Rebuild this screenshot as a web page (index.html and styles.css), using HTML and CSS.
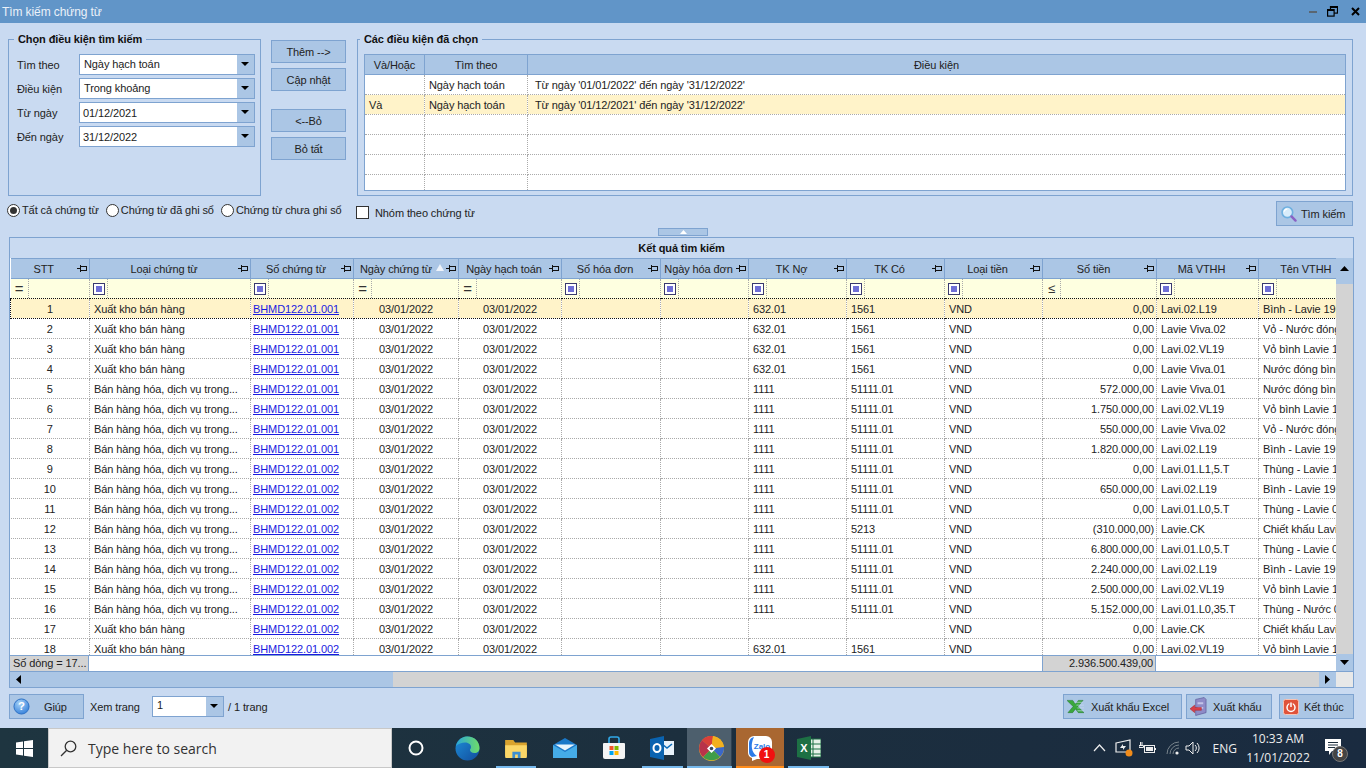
FILE: index.html
```html
<!DOCTYPE html>
<html lang="vi">
<head>
<meta charset="utf-8">
<title>Tìm kiếm chứng từ</title>
<link rel="stylesheet" href="styles.css">
</head>
<body>
<div class="window">
  <header class="titlebar">
    <span class="title">Tìm kiếm chứng từ</span>
    <div class="winctl">
      <svg width="8" height="2" class="min"><rect width="8" height="2" fill="#5a6672"/></svg>
      <svg width="11" height="11" viewBox="0 0 11 11" fill="none" stroke="#000" stroke-width="1.2"><rect x="3.5" y=".6" width="7" height="6.5"/><rect x=".6" y="3.6" width="6.5" height="6.5" fill="#6195c8"/><path d="M.6 4.2h6.500M3.500 1.200h7" stroke-width="1.600"/></svg>
      <svg class="close" width="9" height="9" viewBox="0 0 9 9" stroke="#000" stroke-width="2"><path d="M1 1l7 7M8 1L1 8"/></svg>
    </div>
  </header>

  <section class="top">
    <div class="topleft">
      <div class="group left-group">
        <span class="legend">Chọn điều kiện tìm kiếm</span>
        <div class="formrow"><label>Tìm theo</label><div class="combo"><span>Ngày hạch toán</span><i class="drop"></i></div></div>
        <div class="formrow"><label>Điều kiện</label><div class="combo"><span>Trong khoảng</span><i class="drop"></i></div></div>
        <div class="formrow"><label>Từ ngày</label><div class="combo date"><span>01/12/2021</span><i class="drop"></i></div></div>
        <div class="formrow"><label>Đến ngày</label><div class="combo date"><span>31/12/2022</span><i class="drop"></i></div></div>
      </div>
      <div class="actions">
        <button class="btn">Thêm --&gt;</button>
        <button class="btn">Cập nhật</button>
        <button class="btn gap">&lt;--Bỏ</button>
        <button class="btn">Bỏ tất</button>
      </div>
    </div>
    <div class="group right-group">
      <span class="legend">Các điều kiện đã chọn</span>
      <table class="cond">
        <colgroup><col class="c1"><col class="c2"><col></colgroup>
        <thead><tr><th>Và/Hoặc</th><th>Tìm theo</th><th>Điều kiện</th></tr></thead>
        <tbody>
          <tr><td></td><td>Ngày hạch toán</td><td class="pad">Từ ngày '01/01/2022' đến ngày '31/12/2022'</td></tr>
          <tr class="sel"><td>Và</td><td>Ngày hạch toán</td><td class="pad">Từ ngày '01/12/2021' đến ngày '31/12/2022'</td></tr>
          <tr><td></td><td></td><td></td></tr>
          <tr><td></td><td></td><td></td></tr>
          <tr><td></td><td></td><td></td></tr>
          <tr class="short"><td></td><td></td><td></td></tr>
        </tbody>
      </table>
    </div>
  </section>

  <section class="optrow">
    <div class="radios">
      <span class="radio on"><i></i>Tất cả chứng từ</span>
      <span class="radio"><i></i>Chứng từ đã ghi sổ</span>
      <span class="radio"><i></i>Chứng từ chưa ghi sổ</span>
    </div>
    <span class="check"><i></i>Nhóm theo chứng từ</span>
    <button class="btn search">
      <svg width="18" height="18" viewBox="0 0 22 22"><circle cx="9" cy="9" r="6.500" fill="#d8ecfb" stroke="#6fb0e0" stroke-width="2"/><path d="M5 8a4 4 0 0 1 4-3" stroke="#fff" stroke-width="1.500" fill="none"/><path d="M14 14l5 5" stroke="#8a62c4" stroke-width="3" stroke-linecap="round"/></svg>
      <span>Tìm kiếm</span>
    </button>
  </section>

  <div class="splitter"><span class="grip"><svg width="7" height="4"><path d="M0 4l3.500-4 3.500 4z" fill="#fff"/></svg></span></div>

  <section class="results">
    <div class="results-title">Kết quả tìm kiếm</div>
    <div class="results-body">
      <div class="gridcol">
        <div class="gridmain">
          <table class="grid">
            <colgroup>
              <col class="w1"><col class="w2"><col class="w3"><col class="w4"><col class="w5"><col class="w6"><col class="w7"><col class="w8"><col class="w9"><col class="w10"><col class="w11"><col class="w12"><col class="w13">
            </colgroup>
            <thead>
              <tr>
                <th>STT<b class="pin"></b></th><th>Loại chứng từ<b class="pin"></b></th><th>Số chứng từ<b class="pin"></b></th><th class="sorted">Ngày chứng từ <em class="sort"></em><b class="pin"></b></th><th>Ngày hạch toán<b class="pin"></b></th><th>Số hóa đơn<b class="pin"></b></th><th>Ngày hóa đơn<b class="pin"></b></th><th>TK Nợ<b class="pin"></b></th><th>TK Có<b class="pin"></b></th><th>Loại tiền<b class="pin"></b></th><th>Số tiền<b class="pin"></b></th><th>Mã VTHH<b class="pin"></b></th><th>Tên VTHH</th>
              </tr>
              <tr class="filter">
                <td><span class="op eq">=</span></td><td><span class="op"><i class="fbox"></i></span></td><td><span class="op"><i class="fbox"></i></span></td><td><span class="op eq">=</span></td><td><span class="op eq">=</span></td><td><span class="op"><i class="fbox"></i></span></td><td><span class="op"><i class="fbox"></i></span></td><td><span class="op"><i class="fbox"></i></span></td><td><span class="op"><i class="fbox"></i></span></td><td><span class="op"><i class="fbox"></i></span></td><td><span class="op le">≤</span></td><td><span class="op"><i class="fbox"></i></span></td><td><span class="op"><i class="fbox"></i></span></td>
              </tr>
            </thead>
            <tbody>
              <tr class="current"><td class="ctr">1</td><td>Xuất kho bán hàng</td><td><a href="#">BHMD122.01.001</a></td><td class="ctr">03/01/2022</td><td class="ctr">03/01/2022</td><td></td><td></td><td>632.01</td><td>1561</td><td>VND</td><td class="num">0,00</td><td>Lavi.02.L19</td><td>Bình - Lavie 19L</td></tr>
              <tr><td class="ctr">2</td><td>Xuất kho bán hàng</td><td><a href="#">BHMD122.01.001</a></td><td class="ctr">03/01/2022</td><td class="ctr">03/01/2022</td><td></td><td></td><td>632.01</td><td>1561</td><td>VND</td><td class="num">0,00</td><td>Lavie Viva.02</td><td>Vỏ - Nước đóng bình</td></tr>
              <tr><td class="ctr">3</td><td>Xuất kho bán hàng</td><td><a href="#">BHMD122.01.001</a></td><td class="ctr">03/01/2022</td><td class="ctr">03/01/2022</td><td></td><td></td><td>632.01</td><td>1561</td><td>VND</td><td class="num">0,00</td><td>Lavi.02.VL19</td><td>Vỏ bình Lavie 19L</td></tr>
              <tr><td class="ctr">4</td><td>Xuất kho bán hàng</td><td><a href="#">BHMD122.01.001</a></td><td class="ctr">03/01/2022</td><td class="ctr">03/01/2022</td><td></td><td></td><td>632.01</td><td>1561</td><td>VND</td><td class="num">0,00</td><td>Lavie Viva.01</td><td>Nước đóng bình</td></tr>
              <tr><td class="ctr">5</td><td>Bán hàng hóa, dịch vụ trong...</td><td><a href="#">BHMD122.01.001</a></td><td class="ctr">03/01/2022</td><td class="ctr">03/01/2022</td><td></td><td></td><td>1111</td><td>51111.01</td><td>VND</td><td class="num">572.000,00</td><td>Lavie Viva.01</td><td>Nước đóng bình</td></tr>
              <tr><td class="ctr">6</td><td>Bán hàng hóa, dịch vụ trong...</td><td><a href="#">BHMD122.01.001</a></td><td class="ctr">03/01/2022</td><td class="ctr">03/01/2022</td><td></td><td></td><td>1111</td><td>51111.01</td><td>VND</td><td class="num">1.750.000,00</td><td>Lavi.02.VL19</td><td>Vỏ bình Lavie 19L</td></tr>
              <tr><td class="ctr">7</td><td>Bán hàng hóa, dịch vụ trong...</td><td><a href="#">BHMD122.01.001</a></td><td class="ctr">03/01/2022</td><td class="ctr">03/01/2022</td><td></td><td></td><td>1111</td><td>51111.01</td><td>VND</td><td class="num">550.000,00</td><td>Lavie Viva.02</td><td>Vỏ - Nước đóng bình</td></tr>
              <tr><td class="ctr">8</td><td>Bán hàng hóa, dịch vụ trong...</td><td><a href="#">BHMD122.01.001</a></td><td class="ctr">03/01/2022</td><td class="ctr">03/01/2022</td><td></td><td></td><td>1111</td><td>51111.01</td><td>VND</td><td class="num">1.820.000,00</td><td>Lavi.02.L19</td><td>Bình - Lavie 19L</td></tr>
              <tr><td class="ctr">9</td><td>Bán hàng hóa, dịch vụ trong...</td><td><a href="#">BHMD122.01.002</a></td><td class="ctr">03/01/2022</td><td class="ctr">03/01/2022</td><td></td><td></td><td>1111</td><td>51111.01</td><td>VND</td><td class="num">0,00</td><td>Lavi.01.L1,5.T</td><td>Thùng - Lavie 1,5L</td></tr>
              <tr><td class="ctr">10</td><td>Bán hàng hóa, dịch vụ trong...</td><td><a href="#">BHMD122.01.002</a></td><td class="ctr">03/01/2022</td><td class="ctr">03/01/2022</td><td></td><td></td><td>1111</td><td>51111.01</td><td>VND</td><td class="num">650.000,00</td><td>Lavi.02.L19</td><td>Bình - Lavie 19L</td></tr>
              <tr><td class="ctr">11</td><td>Bán hàng hóa, dịch vụ trong...</td><td><a href="#">BHMD122.01.002</a></td><td class="ctr">03/01/2022</td><td class="ctr">03/01/2022</td><td></td><td></td><td>1111</td><td>51111.01</td><td>VND</td><td class="num">0,00</td><td>Lavi.01.L0,5.T</td><td>Thùng - Lavie 0,5L</td></tr>
              <tr><td class="ctr">12</td><td>Bán hàng hóa, dịch vụ trong...</td><td><a href="#">BHMD122.01.002</a></td><td class="ctr">03/01/2022</td><td class="ctr">03/01/2022</td><td></td><td></td><td>1111</td><td>5213</td><td>VND</td><td class="num">(310.000,00)</td><td>Lavie.CK</td><td>Chiết khấu Lavie</td></tr>
              <tr><td class="ctr">13</td><td>Bán hàng hóa, dịch vụ trong...</td><td><a href="#">BHMD122.01.002</a></td><td class="ctr">03/01/2022</td><td class="ctr">03/01/2022</td><td></td><td></td><td>1111</td><td>51111.01</td><td>VND</td><td class="num">6.800.000,00</td><td>Lavi.01.L0,5.T</td><td>Thùng - Lavie 0,5L</td></tr>
              <tr><td class="ctr">14</td><td>Bán hàng hóa, dịch vụ trong...</td><td><a href="#">BHMD122.01.002</a></td><td class="ctr">03/01/2022</td><td class="ctr">03/01/2022</td><td></td><td></td><td>1111</td><td>51111.01</td><td>VND</td><td class="num">2.240.000,00</td><td>Lavi.02.L19</td><td>Bình - Lavie 19L</td></tr>
              <tr><td class="ctr">15</td><td>Bán hàng hóa, dịch vụ trong...</td><td><a href="#">BHMD122.01.002</a></td><td class="ctr">03/01/2022</td><td class="ctr">03/01/2022</td><td></td><td></td><td>1111</td><td>51111.01</td><td>VND</td><td class="num">2.500.000,00</td><td>Lavi.02.VL19</td><td>Vỏ bình Lavie 19L</td></tr>
              <tr><td class="ctr">16</td><td>Bán hàng hóa, dịch vụ trong...</td><td><a href="#">BHMD122.01.002</a></td><td class="ctr">03/01/2022</td><td class="ctr">03/01/2022</td><td></td><td></td><td>1111</td><td>51111.01</td><td>VND</td><td class="num">5.152.000,00</td><td>Lavi.01.L0,35.T</td><td>Thùng - Nước 0,35L</td></tr>
              <tr><td class="ctr">17</td><td>Xuất kho bán hàng</td><td><a href="#">BHMD122.01.002</a></td><td class="ctr">03/01/2022</td><td class="ctr">03/01/2022</td><td></td><td></td><td></td><td></td><td>VND</td><td class="num">0,00</td><td>Lavie.CK</td><td>Chiết khấu Lavie</td></tr>
              <tr><td class="ctr">18</td><td>Xuất kho bán hàng</td><td><a href="#">BHMD122.01.002</a></td><td class="ctr">03/01/2022</td><td class="ctr">03/01/2022</td><td></td><td></td><td>632.01</td><td>1561</td><td>VND</td><td class="num">0,00</td><td>Lavi.02.VL19</td><td>Vỏ bình Lavie 19L</td></tr>
            </tbody>
          </table>
        </div>
        <div class="summary">
          <span class="sum-count">Số dòng = 17...</span>
          <span class="sum-blank"></span>
          <span class="sum-total">2.936.500.439,00</span>
          <span class="sum-rest"></span>
        </div>
      </div>
      <div class="vscroll">
        <span class="sb-btn up"><svg width="9" height="5"><path d="M0 5l4.500-5 4.500 5z" fill="#000"/></svg></span>
        <span class="sb-track"></span>
        <span class="sb-btn"><svg width="9" height="5"><path d="M0 0l4.500 5 4.500-5z" fill="#000"/></svg></span>
      </div>
    </div>
    <div class="hscroll">
      <span class="hs-btn"><svg width="5" height="9"><path d="M5 0L0 4.500 5 9z" fill="#000"/></svg></span>
      <span class="hs-thumb"></span>
      <span class="hs-track"></span>
      <span class="hs-btn"><svg width="5" height="9"><path d="M0 0l5 4.500L0 9z" fill="#000"/></svg></span>
      <span class="hs-corner"></span>
    </div>
  </section>

  <footer class="bottom">
    <button class="btn help">
      <svg width="17" height="17" viewBox="0 0 18 18"><defs><radialGradient id="hg" cx=".4" cy=".3" r=".8"><stop offset="0" stop-color="#a9d4f7"/><stop offset="1" stop-color="#2a79d8"/></radialGradient></defs><circle cx="9" cy="9" r="8" fill="url(#hg)" stroke="#2b6fc2"/><text x="9" y="13" text-anchor="middle" class="qmark">?</text></svg>
      <span>Giúp</span>
    </button>
    <span class="pg-label">Xem trang</span>
    <div class="combo pager"><span>1</span><i class="drop"></i></div>
    <span class="pg-total">/ 1 trang</span>
    <div class="bottom-right">
      <button class="btn excel">
        <svg width="17" height="16" viewBox="0 0 18 16"><path d="M0 1h6l3 4 3-4h5l-5.500 6.500L18 14h-6l-3-4-3 4H1l5.500-6.500z" fill="#3aa83c" stroke="#1c6e26" stroke-width=".5"/><path d="M8 3h9M10 6h8M11 9h7M11 12h7" stroke="#c9daf1" stroke-width=".7"/></svg>
        <span>Xuất khẩu Excel</span>
      </button>
      <button class="btn export">
        <svg width="17" height="19" viewBox="0 0 18 19"><path d="M6 2l9-2 2 2v14l-11 3z" fill="#8e8cc8" stroke="#5b5a98" stroke-width=".7"/><path d="M8 5h6v2H8zM8 10h6v2H8z" fill="#c4c4e8"/><path d="M0 12l5-4v2.500h7v3H5V16z" fill="#d8404a" stroke="#a52028" stroke-width=".5"/></svg>
        <span>Xuất khẩu</span>
      </button>
      <button class="btn quit">
        <svg width="16" height="16" viewBox="0 0 16 16"><rect x=".5" y=".5" width="15" height="15" rx="2" fill="#e0533a" stroke="#f7c4b4"/><circle cx="8" cy="8.500" r="4" fill="none" stroke="#fff" stroke-width="1.500"/><path d="M8 3v5" stroke="#e0533a" stroke-width="3.500"/><path d="M8 3.500v4.500" stroke="#fff" stroke-width="1.500"/></svg>
        <span>Kết thúc</span>
      </button>
    </div>
  </footer>
</div>

<nav class="taskbar">
  <span class="start"><svg width="17" height="17" viewBox="0 0 17 17" fill="#fff"><path d="M0 2.500l7-1V8H0zM8 1.300L17 0v8H8zM0 9h7v6.500l-7-1zM8 9h9v8l-9-1.300z"/></svg></span>
  <div class="tsearch">
    <svg width="17" height="17" viewBox="0 0 17 17" fill="none" stroke="#333" stroke-width="1.300"><circle cx="10.500" cy="6.500" r="5.300"/><path d="M6.700 10.300L1 16"/></svg>
    <span>Type here to search</span>
  </div>
  <div class="tasks">
    <span class="task"><svg width="16" height="16"><circle cx="8" cy="8" r="6.500" fill="none" stroke="#fff" stroke-width="2"/></svg></span>
    <span class="task edge">
      <svg width="25" height="25" viewBox="0 0 25 25"><defs><linearGradient id="eg" x1="0" y1="0" x2="1" y2="1"><stop offset="0" stop-color="#1d8ed8"/><stop offset="1" stop-color="#124c9c"/></linearGradient><linearGradient id="eh" x1="0" y1="0" x2="1" y2="0"><stop offset="0" stop-color="#2aa7d8"/><stop offset="1" stop-color="#6fdc68"/></linearGradient></defs><circle cx="12.500" cy="12.500" r="12" fill="url(#eg)"/><path d="M1 10C3 2 9 .5 12.500 .5 20 .5 24.500 6 24.500 12c0 3-2 5-5 5-3 0-4.500-1.500-4.500-3 0-1 1-1.500 1-3 0-3-3-4.500-6-4.500S3 8 1 10z" fill="url(#eh)"/></svg>
    </span>
    <span class="task run">
      <svg width="22" height="19" viewBox="0 0 24 21"><path d="M0 1h9l2 3h13v15H0z" fill="#d9a32e"/><path d="M0 7h24v13a1 1 0 0 1-1 1H1a1 1 0 0 1-1-1z" fill="#fbd768"/><path d="M8 14h9v7h-3v-4h-3v4H8z" fill="#3d8fd0"/></svg>
    </span>
    <span class="task">
      <svg width="24" height="20" viewBox="0 0 24 20"><path d="M0 7L12 0l12 7v13H0z" fill="#1a78c8"/><path d="M0 7l12 7 12-7v13H0z" fill="#45ace8"/><path d="M2 6.500h20l-10 6z" fill="#e8f4fc"/></svg>
    </span>
    <span class="task">
      <svg width="24" height="24" viewBox="0 0 24 24"><path d="M2 7h20a1 1 0 0 1 1 1v13a2 2 0 0 1-2 2H3a2 2 0 0 1-2-2V8a1 1 0 0 1 1-1z" fill="#f4f4f4"/><path d="M7 7V3a2 2 0 0 1 2-2h6a2 2 0 0 1 2 2v4" fill="none" stroke="#30a8e8" stroke-width="1.600"/><rect x="7.500" y="10" width="4" height="4" fill="#f0562a"/><rect x="12.500" y="10" width="4" height="4" fill="#7fba00"/><rect x="7.500" y="15" width="4" height="4" fill="#00a4ef"/><rect x="12.500" y="15" width="4" height="4" fill="#ffb900"/></svg>
    </span>
    <span class="task run">
      <svg width="24" height="24" viewBox="0 0 24 24"><rect x="10" y="5" width="14" height="14" fill="#e8f2fb"/><path d="M12 8l5 4 5-4" fill="none" stroke="#0a6ab8" stroke-width="1.600"/><path d="M0 3l14-3v24L0 21z" fill="#0a63b0"/><ellipse cx="7" cy="12" rx="3.500" ry="4" fill="none" stroke="#fff" stroke-width="2"/></svg>
    </span>
    <span class="task run active">
      <svg width="25" height="25" viewBox="0 0 25 25"><circle cx="12.500" cy="12.500" r="12.500" fill="#e6b52c"/><path d="M12.500 12.500L3 4A12.500 12.500 0 0 1 14 0z" fill="#d8403a"/><path d="M12.500 12.500L14 0A12.500 12.500 0 0 1 25 11z" fill="#f2b01e"/><path d="M12.500 12.500L25 11a12.500 12.500 0 0 1-4 10z" fill="#3a68c8"/><path d="M12.500 12.500L21 21a12.500 12.500 0 0 1-17 0z" fill="#3f9d48"/><path d="M12.500 12.500L4 21A12.500 12.500 0 0 1 3 4z" fill="#b8334a"/><path d="M12.500 8l4.500 4.500-4.500 4.500L8 12.500z" fill="#fff"/><circle cx="12.500" cy="12.500" r="1.800" fill="#394a5c"/></svg>
    </span>
    <span class="task zalo">
      <svg width="24" height="25" viewBox="0 0 24 25"><path d="M6 0h12a6 6 0 0 1 6 6v11a6 6 0 0 1-6 6H9l-5 2v-3a6 6 0 0 1-4-5V6a6 6 0 0 1 6-6z" fill="#fff"/><path d="M6 1C2 2 1 5 1 8v8c0 2 1 4 3 5l5-1C5 18 3 12 4 7c.3-2 1-4 2-6z" fill="#2b7be8"/><text x="14" y="13" text-anchor="middle" class="zalotxt">Zalo</text></svg>
      <em class="zbadge">1</em>
    </span>
    <span class="task run">
      <svg width="24" height="24" viewBox="0 0 24 24"><rect x="10" y="3" width="14" height="18" fill="#e6f1e8" stroke="#1d7044"/><path d="M10 8h14M10 13h14M10 18h14M16 3v18" stroke="#1d7044"/><path d="M0 3l14-3v24L0 21z" fill="#1d7044"/><text x="7" y="16" text-anchor="middle" class="xtxt">X</text></svg>
    </span>
  </div>
  <div class="tray">
    <svg width="13" height="8" viewBox="0 0 13 8" fill="none" stroke="#eee" stroke-width="1.200"><path d="M1 7l5.500-6L12 7"/></svg>
    <span class="tray-i">
      <svg width="18" height="18" viewBox="0 0 18 18" fill="none" stroke="#eee" stroke-width="1.200"><path d="M1 4l14-3v12H1z"/><path d="M5 9l3-4v2h3l-3 4V9z" fill="#eee" stroke="none"/><circle cx="14" cy="14" r="3.500" fill="#f28c1a" stroke="none"/></svg>
    </span>
    <svg class="t-batt" width="17" height="12" viewBox="0 0 17 12" fill="none" stroke="#eee"><rect x="5.500" y="3.500" width="10" height="7"/><rect x="7" y="5" width="7" height="4" fill="#eee" stroke="none"/><path d="M16.500 6v2M0 3.500h4.500v2H0zM1.500 0v3M3 0v3"/></svg>
    <svg class="t-wifi" width="15" height="14" viewBox="0 0 15 14" fill="none" stroke="#78848c"><path d="M1 13a12 12 0 0 1 12-12M4 13a9 9 0 0 1 9-9M7 13a6 6 0 0 1 6-6"/><circle cx="11" cy="12" r="1.600" fill="#eee" stroke="none"/></svg>
    <svg class="t-vol" width="16" height="14" viewBox="0 0 16 14" fill="none" stroke="#eee"><path d="M1 5h3l4-4v12L4 9H1z"/><path d="M10 4a4 4 0 0 1 0 6M12 2a7 7 0 0 1 0 10"/></svg>
    <span class="lang">ENG</span>
    <span class="clock"><span>10:33 AM</span><span>11/01/2022</span></span>
    <span class="notif">
      <svg width="16" height="17" viewBox="0 0 16 17"><path d="M0 0h16v12H7l-3 4v-4H0z" fill="#fff"/><path d="M3 3.500h10M3 6h10M3 8.500h7" stroke="#1c2f3e"/></svg>
      <em class="nbadge">8</em>
    </span>
  </div>
</nav>
</body>
</html>
```
FILE: styles.css
```css
* { box-sizing: border-box; }
html, body { margin: 0; padding: 0; width: 1366px; height: 768px; overflow: hidden; }
body { font: 11px "Liberation Sans", Arial, sans-serif; letter-spacing: -0.1px; color: #222; background: #c9daf1; display: flex; flex-direction: column; }
button { font: inherit; letter-spacing: inherit; color: inherit; padding: 0; cursor: default; }

.window { height: 728px; display: flex; flex-direction: column; background: #c9daf1; }
.titlebar { height: 23px; background: #6195c8; display: flex; align-items: center; justify-content: space-between; padding: 0 6px 0 2px; flex: none; }
.title { color: #eaf1f9; font-size: 12px; padding-top: 1px; }
.winctl { display: flex; align-items: center; gap: 10px; }
.close { margin-left: 3px; }

.top { display: flex; gap: 11px; padding: 16px 13px 0 8px; height: 173px; flex: none; }
.topleft { display: flex; gap: 10px; }
.group { position: relative; border: 1px solid #7ea3d0; height: 157px; }
.legend { position: absolute; left: 5px; top: -9px; padding: 0 4px; background: #c9daf1; font-weight: bold; color: #111; line-height: 16px; }
.right-group .legend { left: 2px; }
.left-group { width: 253px; padding: 14px 5px 0 8px; display: flex; flex-direction: column; gap: 4px; }
.formrow { display: flex; align-items: center; height: 20px; }
.formrow label { width: 62px; padding-top: 2px; }
.combo { flex: 1; height: 21px; border: 1px solid #7ea3d0; background: #fff; display: flex; align-items: stretch; justify-content: space-between; }
.combo span { padding-left: 4px; line-height: 18px; }
.combo.date span { padding-left: 3px; line-height: 20px; }
.drop { width: 17px; background: #abc6e5; position: relative; display: block; flex: none; }
.drop::after { content: ""; position: absolute; left: 4px; top: 7px; border: 4px solid transparent; border-top: 4px solid #000; border-bottom: 0; }

.actions { display: flex; flex-direction: column; width: 75px; padding-top: 1px; gap: 5px; }
.btn { border: 1px solid #7ea3d0; background: #abc6e5; height: 23px; display: flex; align-items: center; justify-content: center; flex: none; }
.actions .gap { margin-top: 13px; }
.right-group { flex: 1; padding: 14px 6px 0 6px; }

.cond { width: 100%; height: 136px; border-collapse: collapse; table-layout: fixed; border: 1px solid #7ea3d0; background: #fff; }
.c1 { width: 60px; }
.c2 { width: 103px; }
.cond th { height: 20px; font-weight: normal; background: #abc6e5; border-right: 1px solid #7ea3d0; border-bottom: 1px solid #7ea3d0; padding: 0; }
.cond td { height: 20px; padding: 0 0 0 4px; border-right: 1px dotted #aaa; border-bottom: 1px dotted #aaa; white-space: nowrap; overflow: hidden; }
.cond td.pad { padding-left: 7px; }
.cond .sel td { background: #fff3c9; }
.cond .short td { height: 16px; border-bottom: 0; }

.optrow { height: 32px; display: flex; align-items: flex-start; padding: 5px 13px 0 7px; flex: none; }
.radios { display: flex; gap: 7px; width: 349px; padding-top: 2px; }
.radio { display: flex; align-items: center; gap: 2px; line-height: 14px; white-space: nowrap; }
.radio i { width: 13px; height: 13px; border-radius: 50%; border: 1px solid #333; background: #fff; display: block; position: relative; }
.radio.on i::after { content: ""; position: absolute; left: 2px; top: 2px; width: 7px; height: 7px; border-radius: 50%; background: #333; }
.check { display: flex; align-items: center; gap: 6px; margin-top: 5px; color: #222; }
.check i { width: 13px; height: 13px; border: 1px solid #333; background: #fff; display: block; }
.search { margin-left: auto; width: 77px; height: 25px; justify-content: flex-start; padding-left: 3px; gap: 3px; }

.splitter { height: 9px; display: flex; justify-content: center; flex: none; }
.grip { width: 50px; height: 8px; background: #abc6e5; border: 1px solid #7ea3d0; display: flex; align-items: center; justify-content: center; }

.results { margin: 0 12px 0 9px; border: 1px solid #7ea3d0; height: 451px; display: flex; flex-direction: column; flex: none; }
.results-title { height: 20px; text-align: center; font-weight: bold; line-height: 21px; color: #111; flex: none; }
.results-body { height: 413px; display: flex; flex: none; overflow: hidden; }
.gridcol { width: 1326px; flex: none; display: flex; flex-direction: column; }
.gridmain { height: 397px; overflow: hidden; background: #fff; flex: none; }
.grid { border-collapse: collapse; table-layout: fixed; width: 1326px; }
.w1 { width: 79px; } .w2 { width: 161px; } .w3 { width: 103px; } .w4 { width: 105px; } .w5 { width: 103px; } .w6 { width: 99px; } .w7 { width: 88px; } .w8 { width: 98px; } .w9 { width: 98px; } .w10 { width: 98px; } .w11 { width: 114px; } .w12 { width: 102px; } .w13 { width: 78px; }
.grid th { height: 20px; font-weight: normal; background: #abc6e5; border-right: 1px solid #7ea3d0; border-top: 1px solid #7ea3d0; border-bottom: 1px solid #7ea3d0; padding: 0 12px 0 0; position: relative; white-space: nowrap; }
.grid th.sorted { padding-right: 8px; }
.grid th:last-child { border-right: 0; padding: 0 0 0 16px; }
.pin { position: absolute; right: 2px; top: 7px; width: 6px; height: 5px; border: 1px solid #111; border-width: 1px 1px 1px 0; display: block; }
.pin::before { content: ""; position: absolute; left: -4px; top: 1px; width: 4px; height: 1px; background: #111; }
.pin::after { content: ""; position: absolute; left: -1px; top: -2px; width: 1px; height: 7px; background: #111; }
.sort { display: inline-block; width: 0; height: 0; border: 4px solid transparent; border-bottom: 7px solid #eef3fa; border-top: 0; margin-left: 1px; vertical-align: 2px; }

.filter td { height: 20px; background: #feffe0; padding: 0; border-right: 1px dotted #aaa; border-bottom: 1px dotted #111; }
.op { display: flex; width: 18px; height: 19px; border-right: 1px dotted #aaa; align-items: center; justify-content: center; color: #333; }
.eq { font-size: 15px; }
.fbox { width: 12px; height: 12px; display: block; border: 1px solid #39396e; background: #fff; position: relative; }
.fbox::after { content: ""; position: absolute; inset: 2px; background: #6f6fd6; }
.le { font-size: 13px; }

.grid tbody td { height: 20px; padding: 0 0 0 4px; border-right: 1px dotted #aaa; border-bottom: 1px dotted #aaa; white-space: nowrap; overflow: hidden; color: #222; }
.grid tbody td:nth-child(3) { padding-left: 2px; }
.grid tbody tr { background: #fff; }
.grid tbody td.ctr { text-align: center; padding: 0; }
.grid tbody td.num { text-align: right; padding: 0 2px 0 0; }
.grid a { color: #1a1ae0; text-decoration: underline; }
.grid tbody .current td { background: #fff3c9; border-bottom: 1px dotted #111; }
.grid tbody .current td:first-child { border-left: 1px dotted #111; }

.vscroll { width: 17px; background: #abc6e5; display: flex; flex-direction: column; flex: none; }
.sb-btn { height: 17px; display: flex; align-items: center; justify-content: center; background: #abc6e5; flex: none; }
.sb-btn.up { height: 26px; align-items: flex-start; padding-top: 8px; }
.sb-track { flex: 1; background: #d3d3d3; }

.summary { height: 16px; display: flex; border-top: 1px solid #7ea3d0; background: #fff; flex: none; }
.sum-count { width: 79px; background: #d3d3d3; line-height: 14px; padding-left: 3px; white-space: nowrap; overflow: hidden; border-right: 1px solid #7ea3d0; }
.sum-blank { width: 953px; }
.sum-total { width: 114px; background: #d3d3d3; border-left: 1px solid #7ea3d0; border-right: 1px solid #7ea3d0; text-align: right; padding-right: 2px; line-height: 14px; }
.sum-rest { flex: 1; }

.hscroll { height: 16px; display: flex; border-top: 1px solid #7ea3d0; background: #d3d3d3; flex: none; }
.hs-btn { width: 17px; background: #abc6e5; display: flex; align-items: center; justify-content: center; flex: none; }
.hs-thumb { width: 366px; background: #abc6e5; }
.hs-track { flex: 1; }
.hs-corner { width: 17px; background: #e8e8e8; flex: none; }

.bottom { flex: 1; display: flex; align-items: center; padding: 0 12px 3px 9px; }
.help { width: 75px; height: 25px; justify-content: flex-start; padding-left: 3px; gap: 14px; }
.qmark { font: bold 12px "Liberation Sans", sans-serif; fill: #fff; }
.pg-label { margin-left: 6px; width: 62px; }
.pager { flex: none; width: 72px; margin-right: 4px; height: 21px; }
.pager span { line-height: 17px; }
.bottom-right { margin-left: auto; display: flex; gap: 4px; }
.bottom-right .btn { height: 25px; justify-content: flex-start; padding-left: 3px; }
.excel { width: 119px; gap: 7px; }
.export { width: 86px; gap: 6px; }
.quit { width: 75px; margin-left: 3px; gap: 5px; }

.taskbar { height: 40px; background: linear-gradient(90deg, #1e3540, #1c2f3e 50%, #1a2b40); display: flex; align-items: stretch; flex: none; color: #fff; letter-spacing: 0; }
.start { width: 48px; display: flex; align-items: center; justify-content: center; }
.tsearch { width: 344px; background: #f2f2f2; border: 1px solid #c8c8c8; color: #333; display: flex; align-items: center; gap: 11px; padding-left: 11px; font: 14px "Open Sans", sans-serif; }
.tasks { display: flex; flex: none; }
.task { width: 48.800px; display: flex; align-items: center; justify-content: center; position: relative; }
.task.edge { margin-left: 2px; }
.task.run::after { content: ""; position: absolute; left: 4px; right: 4px; bottom: 0; height: 2px; background: #76b9ed; }
.task.active { background: linear-gradient(90deg, #4d5f6d 0 44px, #2f4150 44px 45px, transparent 45px); }
.task.active::after { right: 4px; left: 0; }
.zalo { background: #a96731; }
.zalo::after { content: ""; position: absolute; left: 0; right: 0; bottom: 0; height: 2px; background: #ff8c1a; }
.zalotxt { font: bold 8px "Liberation Sans", sans-serif; fill: #2b7be8; }
.zbadge { position: absolute; left: 23px; top: 19px; width: 16px; height: 16px; border-radius: 50%; background: #f01010; color: #fff; font: bold 10px/16px "Liberation Sans", sans-serif; text-align: center; }
.xtxt { font: bold 11px "Liberation Sans", sans-serif; fill: #fff; }
.tray { margin-left: auto; display: flex; align-items: center; padding-right: 25px; font: 12px "Open Sans", sans-serif; color: #eee; }
.tray-i { display: flex; margin-left: 9px; }
.t-batt { margin-left: 6px; }
.t-wifi { margin-left: 10px; }
.t-vol { margin-left: 4px; }
.lang { margin-left: 12px; }
.clock { display: flex; flex-direction: column; align-items: center; line-height: 19px; margin-left: 3px; width: 76px; }
.notif { position: relative; display: flex; margin-left: 9px; margin-top: -1px; }
.nbadge { position: absolute; left: 7px; top: 7px; width: 16px; height: 16px; border-radius: 50%; background: #444; border: 1px solid #777; color: #fff; font: bold 10px/14px "Liberation Sans", sans-serif; text-align: center; }
```
